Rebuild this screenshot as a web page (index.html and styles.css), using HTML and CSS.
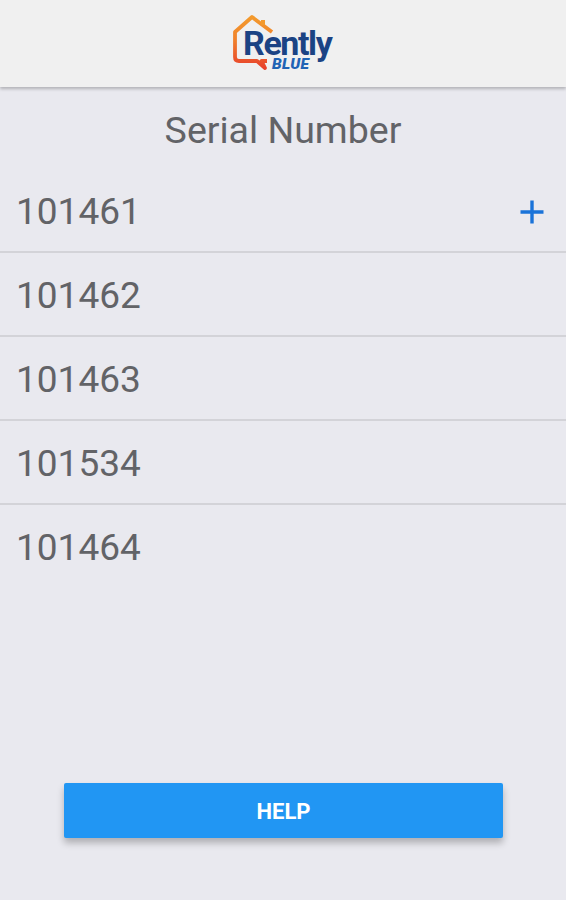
FILE: index.html
```html
<!DOCTYPE html>
<html lang="en">
<head>
    <meta charset="UTF-8">
    <meta name="viewport" content="width=device-width, initial-scale=1.0">
    <title>Serial Number</title>
    <link rel="stylesheet" href="styles.css">
</head>
<body>
    <div class="app">
        <header class="topbar">
            <div class="logo">
                <svg class="logo-house" width="60" height="60" viewBox="0 0 60 60" fill="none">
                    <defs>
                        <linearGradient id="houseStroke" gradientUnits="userSpaceOnUse" x1="0" y1="3" x2="0" y2="54">
                            <stop offset="0" stop-color="#f39a2d"/>
                            <stop offset="0.45" stop-color="#f0812c"/>
                            <stop offset="1" stop-color="#e8412c"/>
                        </linearGradient>
                    </defs>
                    <path d="M40 18 L20 3 L3 18 L3 43 Q3 47 7 47 L25 47 L33 54 L29.500 47 L35 47" stroke="url(#houseStroke)" stroke-width="3.8" stroke-linejoin="round"/>
                    <path d="M31 6 L31 11" stroke="#f39a2d" stroke-width="4"/>
                </svg>
                <span class="logo-name">Rently</span>
                <span class="logo-sub">BLUE</span>
            </div>
        </header>

        <h1 class="title">Serial Number</h1>

        <ul class="serial-list">
            <li class="serial-row">
                <span>101461</span>
                <svg class="plus" width="24" height="24" viewBox="0 0 24 24">
                    <path d="M12 0.500 V23.500 M0.500 12 H23.500" stroke="#1a73d9" stroke-width="3.400" fill="none"/>
                </svg>
            </li>
            <li class="serial-row"><span>101462</span></li>
            <li class="serial-row"><span>101463</span></li>
            <li class="serial-row"><span>101534</span></li>
            <li class="serial-row"><span>101464</span></li>
        </ul>

        <div class="footer">
            <button class="help-btn">HELP</button>
        </div>
    </div>
</body>
</html>
```

FILE: styles.css
```css
* {
    box-sizing: border-box;
    margin: 0;
    padding: 0;
}

body {
    font-family: Roboto, "Liberation Sans", sans-serif;
    background-color: #e9e9ef;
    color: #626367;
}

.app {
    display: flex;
    flex-direction: column;
    height: 900px;
    overflow: hidden;
}

.topbar {
    display: flex;
    justify-content: center;
    height: 87px;
    flex-shrink: 0;
    background-color: #f0f0f0;
    box-shadow: 0 2px 3px rgba(0, 0, 0, 0.24);
}

.logo {
    position: relative;
    width: 100px;
    height: 87px;
}

.logo-house {
    position: absolute;
    left: -1px;
    top: 14px;
}

.logo-name {
    position: absolute;
    left: 10px;
    top: 28px;
    font-size: 34px;
    line-height: 30px;
    font-weight: 700;
    letter-spacing: -1.4px;
    color: #1b4384;
}

.logo-sub {
    position: absolute;
    left: 39px;
    top: 58px;
    font-size: 15.500px;
    line-height: 12px;
    font-weight: 900;
    font-style: italic;
    letter-spacing: 0.3px;
    color: #1f63b5;
}

.title {
    height: 82px;
    padding-top: 22px;
    font-size: 37.500px;
    line-height: 43px;
    font-weight: 400;
    text-align: center;
}

.serial-list {
    list-style: none;
}

.serial-row {
    display: flex;
    align-items: center;
    justify-content: space-between;
    height: 84px;
    padding: 3px 22px 0 16px;
    font-size: 37px;
    border-bottom: 2px solid #d3d3d8;
}

.serial-row:last-child {
    border-bottom-color: transparent;
}

.footer {
    margin-top: auto;
    padding: 0 63px 62px 64px;
}

.help-btn {
    display: block;
    width: 100%;
    height: 55px;
    padding-top: 2px;
    border: none;
    border-radius: 2px;
    background-color: #2196f3;
    color: #fff;
    font-family: inherit;
    font-size: 22px;
    font-weight: 700;
    box-shadow: 0 5px 7px rgba(0, 0, 0, 0.25);
}
```
